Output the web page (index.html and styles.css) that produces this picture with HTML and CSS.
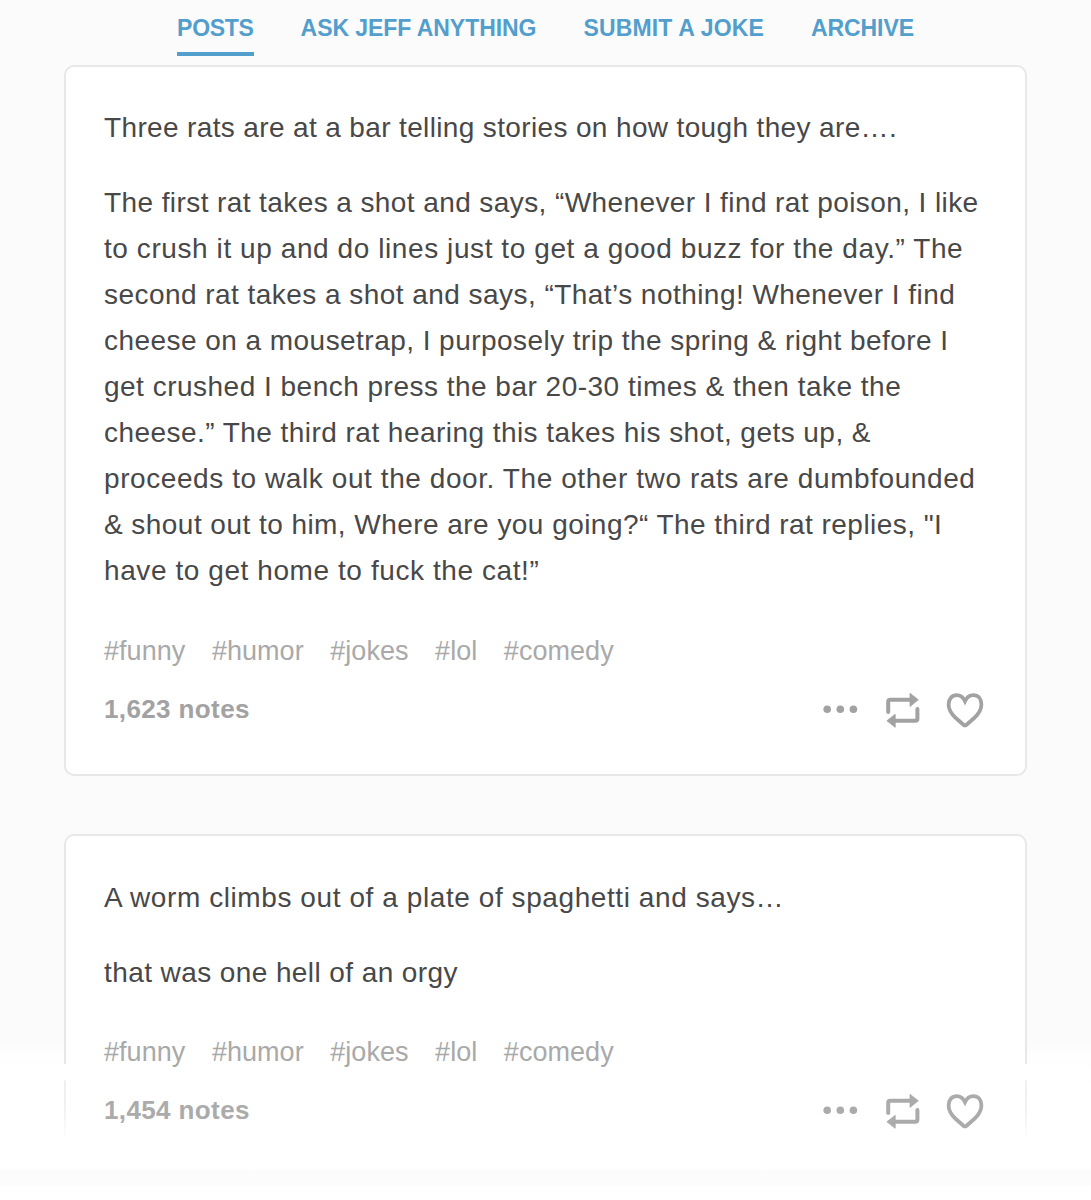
FILE: index.html
```html
<!DOCTYPE html>
<html lang="en">
<head>
<meta charset="utf-8">
<title>Jokes</title>
<link rel="stylesheet" href="styles.css">
</head>
<body>
<svg width="0" height="0" class="sprite" aria-hidden="true">
  <symbol id="more" viewBox="0 0 36 10"><circle cx="4.2" cy="5.3" r="3.8"/><circle cx="17.3" cy="5.3" r="3.8"/><circle cx="30.4" cy="5.3" r="3.8"/></symbol>
  <symbol id="reblog" viewBox="0 0 34 36"><path d="M2.2 20V9.900Q2.2 7.800 4.300 7.800H25M31.400 17V26.700Q31.400 28.800 29.300 28.800H8" fill="none" stroke="currentColor" stroke-width="4" stroke-linecap="round"/><path d="M24 1.300L32.300 7.800L24 14.500ZM9.200 22.300L.9 28.800L9.200 35.300Z" stroke="currentColor" stroke-width=".8" stroke-linejoin="round"/></symbol>
  <symbol id="heart" viewBox="0 0 38 36"><path d="M19 9.200C17 5 14 3.200 10.800 3.200C5.800 3.200 2.600 7 2.600 12.500C2.600 18.500 5.800 22.300 9.800 26L17.500 32.700Q19 34 20.500 32.700L28.200 26C32.200 22.300 35.400 18.500 35.400 12.500C35.400 7 32.200 3.200 27.200 3.200C24 3.200 21 5 19 9.200Z" fill="none" stroke="currentColor" stroke-width="3.800" stroke-linejoin="miter"/></symbol>
</svg>
<nav class="nav">
  <a class="nav-link active">POSTS</a>
  <a class="nav-link ask">ASK JEFF ANYTHING</a>
  <a class="nav-link submit">SUBMIT A JOKE</a>
  <a class="nav-link archive">ARCHIVE</a>
</nav>
<main class="posts">
  <article class="card">
    <p class="tight">Three rats are at a bar telling stories on how tough they are….</p>
    <p><span class="snug">The first rat takes a shot and says, “Whenever I find rat poison, I like</span><br><span class="loose">to crush it up and do lines just to get a good buzz for the day.” The</span><br>second rat takes a shot and says, “That’s nothing! Whenever I find<br>cheese on a mousetrap, I purposely trip the spring &amp; right before I<br><span class="wide">get crushed I bench press the bar 20-30 times &amp; then take the</span><br>cheese.” The third rat hearing this takes his shot, gets up, &amp;<br><span class="loose">proceeds to walk out the door. The other two rats are dumbfounded</span><br>&amp; shout out to him, Where are you going?“ The third rat replies, "I<br><span class="loose">have to get home to fuck the cat!”</span></p>
    <div class="tags"><a>#funny</a><a>#humor</a><a>#jokes</a><a>#lol</a><a>#comedy</a></div>
    <footer class="footer">
      <span class="notes">1,623 notes</span>
      <div class="actions">
        <svg class="more"><use href="#more"/></svg>
        <svg class="reblog"><use href="#reblog"/></svg>
        <svg class="heart"><use href="#heart"/></svg>
      </div>
    </footer>
  </article>
  <article class="card faded">
    <p class="loose">A worm climbs out of a plate of spaghetti and says…</p>
    <p class="snug">that was one hell of an orgy</p>
    <div class="tags"><a>#funny</a><a>#humor</a><a>#jokes</a><a>#lol</a><a>#comedy</a></div>
    <footer class="footer">
      <span class="notes">1,454 notes</span>
      <div class="actions">
        <svg class="more"><use href="#more"/></svg>
        <svg class="reblog"><use href="#reblog"/></svg>
        <svg class="heart"><use href="#heart"/></svg>
      </div>
    </footer>
  </article>
</main>
</body>
</html>
```
FILE: styles.css
```css
* { box-sizing: border-box; }
body {
  margin: 0;
  height: 1200px;
  overflow: hidden;
  background: linear-gradient(#fbfbfb 1040px, #fefefe 1056px, #fff 1090px, #fff 1168px, #fcfcfc 1172px, #fcfcfc 1184px, #fff 1186px);
  color: #484848;
  font-family: "Liberation Sans", Arial, sans-serif;
}
.sprite { display: block; }
.nav {
  display: flex;
  justify-content: center;
  gap: 47px;
  height: 65px;
  font-size: 23px;
  font-weight: 700;
  color: #529ecc;
}
.nav-link {
  height: 56px;
  line-height: 57px;
  white-space: nowrap;
}
.active { border-bottom: 4px solid #529ecc; letter-spacing: -0.3px; }
.ask { letter-spacing: -0.06px; }
.submit { letter-spacing: 0.17px; }
.archive { letter-spacing: -0.1px; }
.posts {
  display: flex;
  flex-direction: column;
  gap: 58px;
  margin: 0 64px;
}
.card {
  height: 711px;
  padding: 38px 38px 0;
  border: 2px solid #e8e8e8;
  border-radius: 10px;
  background: #fff;
}
p {
  margin: 0 0 29px;
  font-size: 28px;
  line-height: 46px;
  letter-spacing: 0.455px;
  white-space: nowrap;
}
.tight { letter-spacing: 0.36px; }
.snug { letter-spacing: 0.41px; }
.wide { letter-spacing: 0.49px; }
.loose { letter-spacing: 0.58px; }
.tags {
  display: flex;
  gap: 26.5px;
  margin-top: 34px;
  font-size: 27px;
  line-height: 46px;
  letter-spacing: 0.05px;
  color: #a9a9a9;
}
.footer {
  display: flex;
  justify-content: space-between;
  align-items: center;
  height: 46px;
  margin-top: 12px;
  color: #a2a2a2;
}
.notes { font-size: 26px; font-weight: 700; letter-spacing: 0.38px; }
.actions { display: flex; align-items: center; padding: 2px 3px 0 0; fill: currentColor; }
.more { width: 36px; height: 10px; margin-bottom: 2px; }
.reblog { width: 34px; height: 36px; margin-left: 27px; }
.heart { width: 38px; height: 36px; margin-left: 26px; }
.faded {
  position: relative;
  isolation: isolate;
  height: 308px;
  padding-top: 39px;
  border-bottom: 0;
  border-radius: 10px 10px 0 0;
}
.faded .tags { margin-top: 33px; }
.faded .footer { color: #ababab; }
/* fades the card edges out beneath its content */
.faded::after {
  content: "";
  position: absolute;
  z-index: -1;
  left: -2px;
  right: -2px;
  bottom: 0;
  height: 78px;
  background: linear-gradient(#fff 16px, rgba(255, 255, 255, 0.3) 17px, rgba(255, 255, 255, 0.4) 60%, #fff);
}
```
